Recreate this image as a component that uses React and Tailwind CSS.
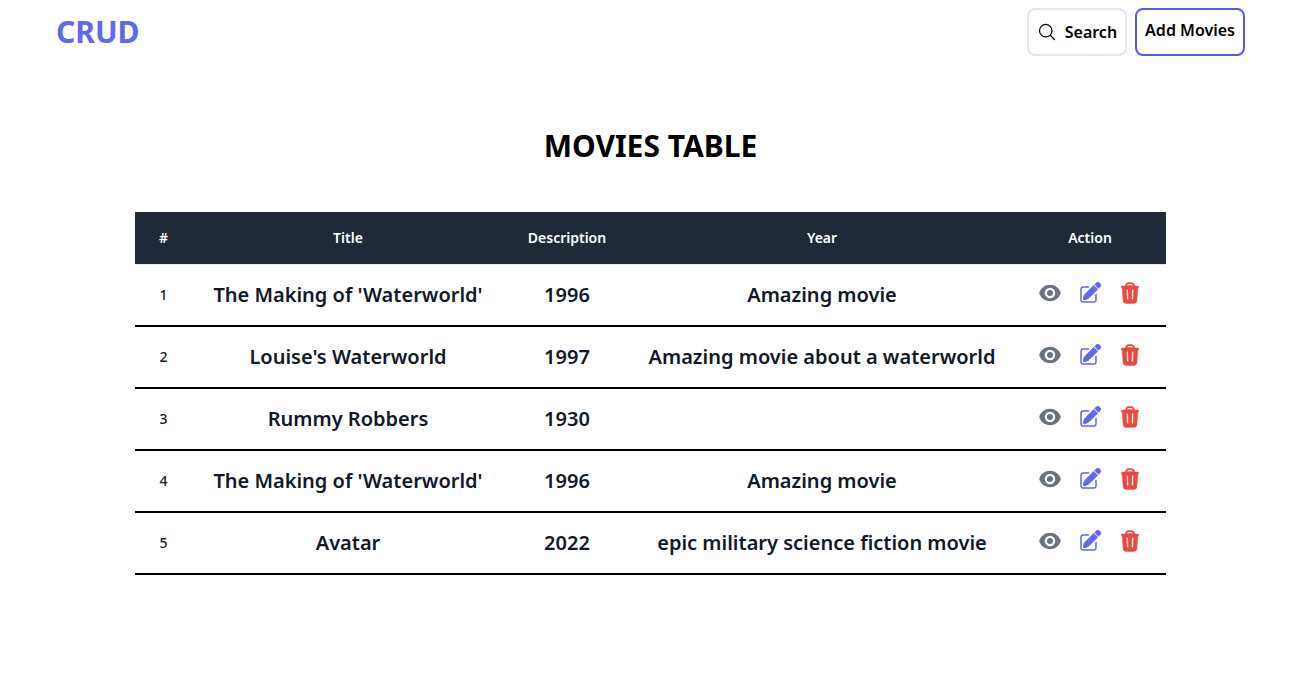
import { HiEye, HiPencilSquare, HiTrash, HiOutlineMagnifyingGlass } from "react-icons/hi2";

const movies = [
  { id: 1, title: "The Making of 'Waterworld'", year: "1996", description: "Amazing movie" },
  { id: 2, title: "Louise's Waterworld", year: "1997", description: "Amazing movie about a waterworld" },
  { id: 3, title: "Rummy Robbers", year: "1930", description: "" },
  { id: 4, title: "The Making of 'Waterworld'", year: "1996", description: "Amazing movie" },
  { id: 5, title: "Avatar", year: "2022", description: "epic military science fiction movie" },
];

function Navbar() {
  return (
    <header className="flex h-16 items-center justify-between px-14">
      <a href="#" className="text-3xl font-bold text-[#6366f1]">CRUD</a>
      <nav className="flex gap-2">
        <button
          type="button"
          className="flex h-12 items-center gap-2 rounded-lg border-2 border-[#e5e7eb] px-2 font-semibold"
        >
          <HiOutlineMagnifyingGlass className="size-5" aria-hidden="true" />
          Search
        </button>
        <a
          href="#add"
          className="flex h-12 items-start rounded-lg border-2 border-[#575ae6] p-2 font-semibold"
        >
          Add Movies
        </a>
      </nav>
    </header>
  );
}

function MovieRow({ movie }) {
  return (
    <tr className="h-[62px] border-b-2 border-black text-xl font-semibold">
      <td className="text-sm font-medium">{movie.id}</td>
      <td>{movie.title}</td>
      <td>{movie.year}</td>
      <td>{movie.description}</td>
      <td>
        <div className="flex justify-center gap-4 pb-1">
          <button type="button" aria-label="View" className="text-[#6b7280]">
            <HiEye className="size-6" />
          </button>
          <button type="button" aria-label="Edit" className="text-[#6366f1]">
            <HiPencilSquare className="size-6 [&>path:first-child]:[stroke-width:1]" />
          </button>
          <button type="button" aria-label="Delete" className="text-[#e54b44]">
            <HiTrash className="size-6 [&>path]:[stroke-width:0.4]" />
          </button>
        </div>
      </td>
    </tr>
  );
}

export default function App() {
  return (
    <div className="min-h-screen bg-white font-['Noto_Sans',sans-serif] text-black">
      <Navbar />
      <main className="px-14 pt-16">
        <h1 className="text-center text-3xl font-bold">MOVIES TABLE</h1>
        <table className="mx-auto mt-12 w-full max-w-[1031px] table-fixed text-center text-[#111827]">
          <thead className="bg-[#1f2937] text-sm text-white">
            <tr className="h-[52px] border-b border-[#e5e7eb]">
              <th className="w-[57px] font-semibold">#</th>
              <th className="w-[312px] font-semibold">Title</th>
              <th className="w-[126px] font-semibold">Description</th>
              <th className="font-semibold">Year</th>
              <th className="w-[152px] font-semibold">Action</th>
            </tr>
          </thead>
          <tbody>
            {movies.map((movie) => (
              <MovieRow key={movie.id} movie={movie} />
            ))}
          </tbody>
        </table>
      </main>
    </div>
  );
}
